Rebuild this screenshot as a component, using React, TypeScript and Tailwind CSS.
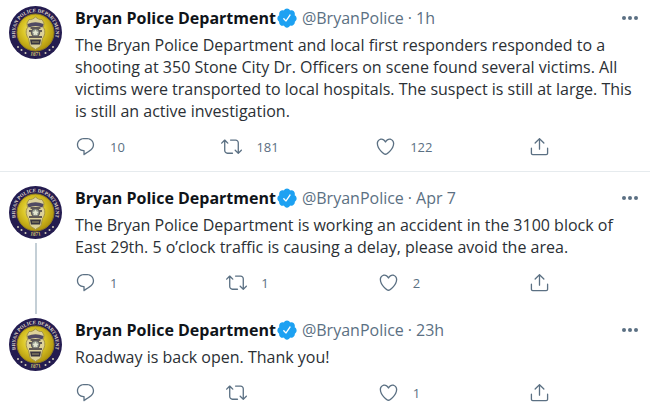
import React from "react";

type Tweet = {
  id: string;
  time: string;
  text: string;
  replies?: number;
  retweets?: number;
  likes?: number;
  threaded?: boolean;
};

const tweets: Tweet[] = [
  {
    id: "shooting",
    time: "1h",
    text: "The Bryan Police Department and local first responders responded to a shooting at 350 Stone City Dr. Officers on scene found several victims. All victims were transported to local hospitals. The suspect is still at large. This is still an active investigation.",
    replies: 10,
    retweets: 181,
    likes: 122,
  },
  {
    id: "accident",
    time: "Apr 7",
    text: "The Bryan Police Department is working an accident in the 3100 block of East 29th. 5 o’clock traffic is causing a delay, please avoid the area.",
    replies: 1,
    retweets: 1,
    likes: 2,
    threaded: true,
  },
  {
    id: "roadway",
    time: "23h",
    text: "Roadway is back open. Thank you!",
    likes: 1,
  },
];

const icons = {
  reply:
    "M14.046 2.242l-4.148-.01h-.002c-4.374 0-7.8 3.427-7.8 7.802 0 4.098 3.186 7.206 7.465 7.37v3.828c0 .108.044.286.12.403.142.225.384.347.632.347.138 0 .277-.038.402-.118.264-.168 6.473-4.14 8.088-5.506 1.902-1.61 3.04-3.97 3.043-6.312v-.017c-.006-4.367-3.43-7.787-7.8-7.788zm3.787 12.972c-1.134.96-4.862 3.405-6.772 4.643V16.67c0-.414-.335-.75-.75-.75h-.396c-3.66 0-6.318-2.476-6.318-5.886 0-3.534 2.768-6.302 6.3-6.302l4.147.01h.002c3.532 0 6.3 2.766 6.302 6.296-.003 1.91-.942 3.844-2.514 5.176z",
  retweet:
    "M23.77 15.67c-.292-.293-.767-.293-1.06 0l-2.22 2.22V7.65c0-2.068-1.683-3.75-3.75-3.75h-5.85c-.414 0-.75.336-.75.75s.336.75.75.75h5.85c1.24 0 2.25 1.01 2.25 2.25v10.24l-2.22-2.22c-.293-.293-.768-.293-1.06 0s-.294.768 0 1.06l3.5 3.5c.145.147.337.22.53.22s.383-.072.53-.22l3.5-3.5c.294-.292.294-.767 0-1.06zm-10.66 3.28H7.26c-1.24 0-2.25-1.01-2.25-2.25V6.46l2.22 2.22c.148.147.34.22.532.22s.384-.073.53-.22c.293-.293.293-.768 0-1.06l-3.5-3.5c-.293-.294-.768-.294-1.06 0l-3.5 3.5c-.294.292-.294.767 0 1.06s.767.293 1.06 0l2.22-2.22V16.7c0 2.068 1.683 3.75 3.75 3.75h5.85c.414 0 .75-.336.75-.75s-.337-.75-.75-.75z",
  like: "M12 21.638h-.014C9.403 21.59 1.95 14.856 1.95 8.478c0-3.064 2.525-5.754 5.403-5.754 2.29 0 3.83 1.58 4.646 2.73.814-1.148 2.354-2.73 4.645-2.73 2.88 0 5.404 2.69 5.404 5.755 0 6.376-7.454 13.11-10.037 13.157H12zM7.354 4.225c-2.08 0-3.903 1.988-3.903 4.255 0 5.74 7.034 11.596 8.55 11.658 1.518-.062 8.55-5.917 8.55-11.658 0-2.267-1.823-4.255-3.903-4.255-2.528 0-3.94 2.936-3.952 2.965-.23.562-1.156.562-1.387 0-.014-.03-1.425-2.965-3.954-2.965z",
  share:
    "M17.53 7.47l-5-5c-.293-.293-.768-.293-1.06 0l-5 5c-.294.293-.294.768 0 1.06s.767.294 1.06 0l3.72-3.72V15c0 .414.336.75.75.75s.75-.336.75-.75V4.81l3.72 3.72c.146.147.338.22.53.22s.384-.072.53-.22c.293-.293.293-.767 0-1.06zM19.708 21.944H4.292C3.028 21.944 2 20.916 2 19.652V14c0-.414.336-.75.75-.75s.75.336.75.75v5.652c0 .437.355.792.792.792h15.416c.437 0 .792-.355.792-.792V14c0-.414.336-.75.75-.75s.75.336.75.75v5.652c0 1.264-1.028 2.292-2.292 2.292z",
  verified:
    "M22.5 12.5c0-1.58-.875-2.95-2.148-3.6.154-.435.238-.905.238-1.4 0-2.21-1.71-3.998-3.818-3.998-.47 0-.92.084-1.336.25C14.818 2.415 13.51 1.5 12 1.5s-2.816.917-3.437 2.25c-.415-.165-.866-.25-1.336-.25-2.11 0-3.818 1.79-3.818 4 0 .494.083.964.237 1.4-1.272.65-2.147 2.018-2.147 3.6 0 1.495.782 2.798 1.942 3.486-.02.17-.032.34-.032.514 0 2.21 1.708 4 3.818 4 .47 0 .92-.086 1.335-.25.62 1.334 1.926 2.25 3.437 2.25 1.512 0 2.818-.916 3.437-2.25.415.163.865.248 1.336.248 2.11 0 3.818-1.79 3.818-4 0-.174-.012-.344-.033-.513 1.158-.687 1.943-1.99 1.943-3.484zm-6.616-3.334l-4.334 6.5c-.145.217-.382.334-.625.334-.143 0-.288-.04-.416-.126l-.115-.094-2.415-2.415c-.293-.293-.293-.768 0-1.06s.768-.294 1.06 0l1.77 1.767 3.825-5.74c.23-.345.696-.436 1.04-.207.346.23.44.696.21 1.04z",
};

function Icon({ name, className }: { name: keyof typeof icons; className: string }) {
  return (
    <svg viewBox="0 0 24 24" fill="currentColor" className={className} aria-hidden="true">
      <path d={icons[name]} />
    </svg>
  );
}

function Seal({ id }: { id: string }) {
  return (
    <svg viewBox="0 0 106 106" className="size-[53px] shrink-0" role="img" aria-label="Bryan Police Department seal">
      <defs>
        <radialGradient id={`${id}-gold`} cx="45%" cy="42%" r="58%">
          <stop offset="0" stopColor="#f5ec9c" />
          <stop offset="0.5" stopColor="#dcc828" />
          <stop offset="1" stopColor="#b0940c" />
        </radialGradient>
        <path id={`${id}-top`} d="M19.1 75 A40.5 40.5 0 1 1 86.9 75" />
        <path id={`${id}-bottom`} d="M33 95 A46 46 0 0 0 73 95" />
      </defs>
      <circle cx="53" cy="53" r="53" fill="#241c50" />
      <circle cx="53" cy="53" r="37" fill={`url(#${id}-gold)`} stroke="#8f7b22" strokeWidth="2" />
      <text className="font-['Liberation_Serif',serif] text-[10px] font-bold" fill="#e2ddca">
        <textPath href={`#${id}-top`} startOffset="50%" textAnchor="middle">
          BRYAN POLICE DEPARTMENT
        </textPath>
      </text>
      <text className="font-['Liberation_Serif',serif] text-[11px] font-bold" fill="#d8c56a">
        <textPath href={`#${id}-bottom`} startOffset="50%" textAnchor="middle">
          1871
        </textPath>
      </text>
      {[[18, 82], [25, 88], [33, 94], [73, 94], [81, 88], [88, 82]].map(([x, y]) => (
        <circle key={x} cx={x} cy={y} r="2" fill="#d4cfbb" />
      ))}
      <path
        d="M53 22 C57 25 61 28 66 27 L70 34 L69 43 C74 51 71 60 67 65 L64 79 C61 83 56 84 53 87 C50 84 45 83 42 79 L39 65 C35 60 32 51 37 43 L36 34 L40 27 C45 28 49 25 53 22Z"
        fill="#ddd29a"
        stroke="#a39347"
        strokeWidth="2"
      />
      <path d="M37 36 Q53 29 69 36 L67 43 Q53 37 39 43Z" fill="#504a62" />
      <path d="M43 44 H63 M40 50 H46 M60 50 H66 M40 62 H66" stroke="#615a54" strokeWidth="4" />
      <circle cx="53" cy="53" r="8" fill="#9ba395" stroke="#5d5858" strokeWidth="3" />
      <path d="M53 47 L55 51 L59 52 L56 55 L57 59 L53 57 L49 59 L50 55 L47 52 L51 51Z" fill="#e5e7d2" />
      <path d="M42 67 H64 L62 77 H44Z" fill="#393540" />
      <path d="M46 72 H60" stroke="#9f956b" strokeWidth="2" />
    </svg>
  );
}

function Action({ name, label, count }: { name: "reply" | "retweet" | "like"; label: string; count?: number }) {
  return (
    <button type="button" aria-label={label} className="flex items-center gap-[14px]">
      <Icon name={name} className="size-[21px]" />
      <span className="min-w-3 text-left text-[13px] leading-5">{count}</span>
    </button>
  );
}

function TweetRow({ tweet }: { tweet: Tweet }) {
  return (
    <article className="flex gap-[13px] pr-2 pl-[9px]">
      <div className="flex flex-col items-center gap-1">
        <Seal id={tweet.id} />
        {tweet.threaded && <div className="mb-1 w-[2px] grow bg-[#c4cfd6]" />}
      </div>
      <div className={tweet.threaded ? "min-w-0 grow pb-[25px]" : "min-w-0 grow pb-[14px]"}>
        <header className="flex h-6 items-center text-base text-[#5b7083]">
          <a href="#profile" className="flex items-center">
            <span className="font-bold text-[#0f1419]">Bryan Police Department</span>
            <Icon name="verified" className="size-[22px] text-[#1da1f2]" />
            <span className="ml-1">@BryanPolice</span>
          </a>
          <span className="mx-1">·</span>
          <time>{tweet.time}</time>
          <button type="button" aria-label="More" className="ml-auto flex gap-[2px] p-1">
            <span className="size-1 rounded-full bg-[#5b7083]" />
            <span className="size-1 rounded-full bg-[#5b7083]" />
            <span className="size-1 rounded-full bg-[#5b7083]" />
          </button>
        </header>
        <p className="mt-1 text-base leading-[22px] text-[#2b3035]">{tweet.text}</p>
        <div className="mt-[14px] flex max-w-[475px] items-center justify-between text-[#5b7083]">
          <Action name="reply" label="Reply" count={tweet.replies} />
          <Action name="retweet" label="Retweet" count={tweet.retweets} />
          <Action name="like" label="Like" count={tweet.likes} />
          <button type="button" aria-label="Share">
            <Icon name="share" className="size-[21px]" />
          </button>
        </div>
      </div>
    </article>
  );
}

export default function App() {
  return (
    <main className="min-h-screen bg-white font-['Open_Sans','Noto_Sans',sans-serif]">
      <section className="border-b border-[#e6ebee] pt-[6px]">
        <TweetRow tweet={tweets[0]} />
      </section>
      <section className="pt-[14px]">
        <TweetRow tweet={tweets[1]} />
        <TweetRow tweet={tweets[2]} />
      </section>
    </main>
  );
}
